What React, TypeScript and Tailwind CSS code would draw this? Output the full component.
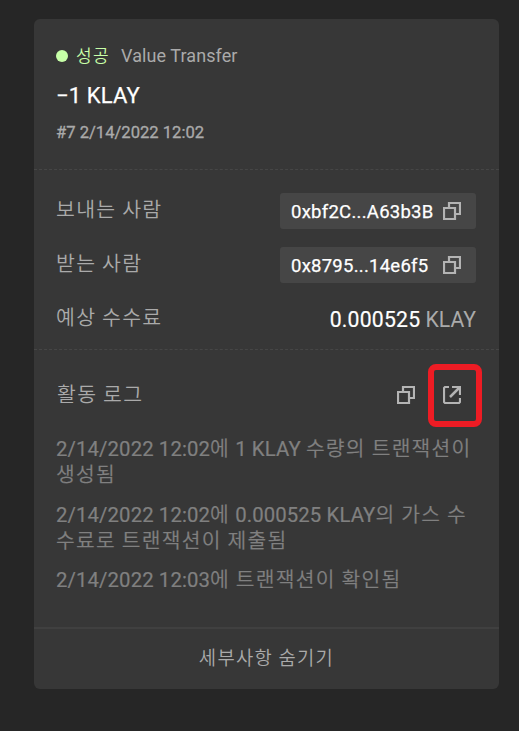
import type { ReactNode } from "react";

const CopyIcon = () => (
  <svg width="18" height="18" viewBox="0 0 18 18" fill="none" stroke="#b4b4b4" strokeWidth="2.200" className="block shrink-0">
    <path d="M1 6h11v11H1z" />
    <path d="M6 6V1h11v11h-5" />
  </svg>
);

const LinkIcon = () => (
  <svg width="18" height="18" viewBox="0 0 18 18" fill="none" stroke="#b4b4b4" strokeWidth="2.200" className="block shrink-0">
    <path d="M6 1H2L1 2v14l1 1h14l1-1v-4" />
    <path d="M9 1h8v8" />
    <path d="M16.500 1.500 7 11" strokeWidth="2.500" />
  </svg>
);

const Ko = ({ children }: { children: ReactNode }) => (
  <span className="font-['Noto_Sans_CJK_KR',sans-serif] leading-[0] font-[350] tracking-[1.27px]">{children}</span>
);

const Address = ({ value, tracking }: { value: string; tracking: string }) => (
  <div className="flex h-9 w-[196px] items-center justify-between rounded-[3px] bg-[#464646] pr-[15px] pl-[11px]">
    <span className={`pt-[2px] text-[18.5px] leading-6 text-white [-webkit-text-stroke:0.25px] ${tracking}`}>{value}</span>
    <CopyIcon />
  </div>
);

const Row = ({ label, children }: { label: string; children: ReactNode }) => (
  <div className="flex h-9 items-center justify-between">
    <span className="mb-[2px] text-[20.500px] leading-8"><Ko>{label}</Ko></span>
    {children}
  </div>
);

export default function App() {
  return (
    <div className="h-[731px] w-[519px] bg-[#262626] pt-[19px] pl-[34px] font-['Roboto','Noto_Sans_CJK_KR',sans-serif] whitespace-nowrap text-[#aaaaaa]">
      <div className="flex h-[670px] w-[465px] flex-col rounded-md bg-[#373737]">
        <div className="flex h-[151px] flex-col border-b border-dashed border-[#464646] pt-[25px] pl-[22px]">
          <div className="flex h-6 items-center">
            <span className="size-3 rounded-full bg-[#c7ffa8]" />
            <span className="ml-2 w-[45px] text-[17px] leading-6 text-[#c7ffa8]"><Ko>성공</Ko></span>
            <span className="text-[18px] leading-6 tracking-[0.08px]">Value Transfer</span>
          </div>
          <div className="mt-[14px] text-[22px] leading-7 tracking-[0.15px] text-white [-webkit-text-stroke:0.25px]">−1 KLAY</div>
          <div className="mt-[13px] text-[16.600px] leading-5 [-webkit-text-stroke:0.3px]">#7 2/14/2022 12:02</div>
        </div>
        <div className="flex h-[180px] flex-col gap-[18px] border-b border-dashed border-[#464646] pt-[23px] pr-[23px] pl-[22px]">
          <Row label="보내는 사람"><Address value="0xbf2C...A63b3B" tracking="tracking-[0.26px]" /></Row>
          <Row label="받는 사람"><Address value="0x8795...14e6f5" tracking="tracking-[0.25px]" /></Row>
          <Row label="예상 수수료">
            <span className="mt-[2px] text-[21.200px] leading-7"><span className="tracking-[0.2px] text-white [-webkit-text-stroke:0.2px]">0.000525</span> KLAY</span>
          </Row>
        </div>
        <div className="flex h-[277px] flex-col">
          <div className="mt-[14px] flex h-[63px] items-center pl-[23px]">
            <span className="w-[340px] text-[20.500px]"><Ko>활동 로그</Ko></span>
            <div className="pb-[2px]"><CopyIcon /></div>
            <div className="ml-[13px] flex h-[63px] w-[54px] items-center rounded-[8px] border-6 border-[#ed1c24] pb-[2px] pl-[9px]">
              <LinkIcon />
            </div>
          </div>
          <div className="mt-[9px] flex flex-col gap-[13.500px] pl-[22px] text-[20.350px] leading-[26px] tracking-[0.1px] text-[#808080] [-webkit-text-stroke:0.2px]">
            <p>2/14/2022 12:02<Ko>에</Ko> 1 KLAY <Ko>수량의 트랜잭션이<br />생성됨</Ko></p>
            <p>2/14/2022 12:02<Ko>에</Ko> 0.000525 KLAY<Ko>의 가스 수<br />수료로 트랜잭션이 제출됨</Ko></p>
            <p>2/14/2022 12:03<Ko>에 트랜잭션이 확인됨</Ko></p>
          </div>
        </div>
        <div className="flex h-[62px] items-center justify-center border-t-2 border-[#404040] pb-1 text-[18.800px]">
          <Ko>세부사항 숨기기</Ko>
        </div>
      </div>
    </div>
  );
}
